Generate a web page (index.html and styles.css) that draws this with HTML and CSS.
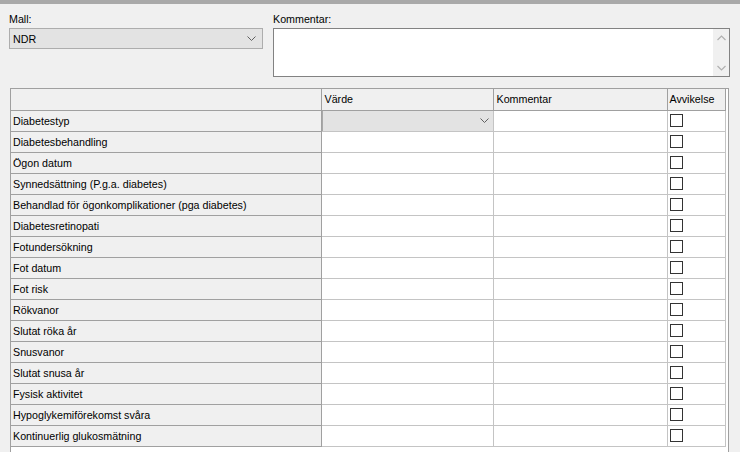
FILE: index.html
```html
<!DOCTYPE html>
<html lang="sv">
<head>
<meta charset="utf-8">
<title>NDR</title>
<link rel="stylesheet" href="styles.css">
</head>
<body>
<div class="topbar"></div>
<div class="form">
  <div class="field mall">
    <div class="label">Mall:</div>
    <div class="select">
      <span>NDR</span>
      <svg class="chev" width="9" height="6" viewBox="0 0 9 6"><path d="M0.5 0.5 L4.5 4.5 L8.5 0.5" fill="none" stroke="#606060" stroke-width="1"/></svg>
    </div>
  </div>
  <div class="field komm">
    <div class="label">Kommentar:</div>
    <div class="textarea">
      <div class="ta-body"></div>
      <div class="scroll">
        <svg width="9" height="6" viewBox="0 0 9 6"><path d="M0.5 5 L4.5 1 L8.5 5" fill="none" stroke="#b0b0b0" stroke-width="1.2"/></svg>
        <svg width="9" height="6" viewBox="0 0 9 6"><path d="M0.5 1 L4.5 5 L8.5 1" fill="none" stroke="#b0b0b0" stroke-width="1.2"/></svg>
      </div>
    </div>
  </div>
</div>
<div class="grid">
  <table>
    <colgroup><col class="c1"><col class="c2"><col class="c3"><col class="c4"></colgroup>
    <thead>
      <tr><th class="lab"></th><th>Värde</th><th>Kommentar</th><th>Avvikelse</th></tr>
    </thead>
    <tbody>
      <tr><td class="lab">Diabetestyp</td><td class="val sel"><div class="cellsel"><svg class="chev" width="9" height="6" viewBox="0 0 9 6"><path d="M0.5 0.5 L4.5 4.5 L8.5 0.5" fill="none" stroke="#606060" stroke-width="1"/></svg></div></td><td></td><td><span class="cb"></span></td></tr>
      <tr><td class="lab">Diabetesbehandling</td><td></td><td></td><td><span class="cb"></span></td></tr>
      <tr><td class="lab">Ögon datum</td><td></td><td></td><td><span class="cb"></span></td></tr>
      <tr><td class="lab">Synnedsättning (P.g.a. diabetes)</td><td></td><td></td><td><span class="cb"></span></td></tr>
      <tr><td class="lab">Behandlad för ögonkomplikationer (pga diabetes)</td><td></td><td></td><td><span class="cb"></span></td></tr>
      <tr><td class="lab">Diabetesretinopati</td><td></td><td></td><td><span class="cb"></span></td></tr>
      <tr><td class="lab">Fotundersökning</td><td></td><td></td><td><span class="cb"></span></td></tr>
      <tr><td class="lab">Fot datum</td><td></td><td></td><td><span class="cb"></span></td></tr>
      <tr><td class="lab">Fot risk</td><td></td><td></td><td><span class="cb"></span></td></tr>
      <tr><td class="lab">Rökvanor</td><td></td><td></td><td><span class="cb"></span></td></tr>
      <tr><td class="lab">Slutat röka år</td><td></td><td></td><td><span class="cb"></span></td></tr>
      <tr><td class="lab">Snusvanor</td><td></td><td></td><td><span class="cb"></span></td></tr>
      <tr><td class="lab">Slutat snusa år</td><td></td><td></td><td><span class="cb"></span></td></tr>
      <tr><td class="lab">Fysisk aktivitet</td><td></td><td></td><td><span class="cb"></span></td></tr>
      <tr><td class="lab">Hypoglykemiförekomst svåra</td><td></td><td></td><td><span class="cb"></span></td></tr>
      <tr><td class="lab">Kontinuerlig glukosmätning</td><td></td><td></td><td><span class="cb"></span></td></tr>
    </tbody>
  </table>
</div>
</body>
</html>
```

FILE: styles.css
```css
html, body {
  margin: 0;
  padding: 0;
}
body {
  background: #f0f0f0;
  font-family: "Liberation Sans", Arial, sans-serif;
  font-size: 10.7px;
  color: #000;
  height: 452px;
  overflow: hidden;
}
.topbar {
  height: 4px;
  background: #a9a9a9;
}
.form {
  display: flex;
  padding: 9px 0 0 9px;
}
.label {
  height: 15px;
  line-height: 13px;
}
.mall {
  width: 254px;
}
.komm {
  margin-left: 10px;
  width: 457px;
}
.select {
  box-sizing: border-box;
  height: 21px;
  border: 1px solid #adadad;
  background: #e3e3e3;
  display: flex;
  align-items: center;
  justify-content: space-between;
  padding: 0 6px 0 3px;
}
.chev {
  display: block;
}
.textarea {
  box-sizing: border-box;
  height: 49px;
  border: 1px solid #828282;
  background: #fff;
  display: flex;
}
.ta-body {
  flex: 1;
}
.scroll {
  width: 16px;
  background: #f0f0f0;
  display: flex;
  flex-direction: column;
  justify-content: space-between;
  align-items: center;
  padding: 6px 0 5px;
}
.grid {
  margin: 11px 0 0 10px;
  width: 719px;
  height: 364px;
  box-sizing: border-box;
  border: 1px solid #a0a0a0;
  border-bottom: none;
  background: #fff;
  overflow: hidden;
}
table {
  border-collapse: collapse;
  table-layout: fixed;
  width: 714px;
}
col.c1 { width: 310px; }
col.c2 { width: 172px; }
col.c3 { width: 174px; }
col.c4 { width: 58px; }
tr {
  height: 21px;
}
th, td {
  height: 21px;
  padding: 0 0 0 3px;
  border-right: 1px solid #c4c4c4;
  border-bottom: 1px solid #c4c4c4;
  text-align: left;
  font-weight: normal;
  white-space: nowrap;
  overflow: hidden;
  box-sizing: border-box;
}
th {
  background: #f0f0f0;
  border-right-color: #a0a0a0;
  border-bottom-color: #a0a0a0;
}
td.lab, th.lab {
  background: #f0f0f0;
  border-right: 1px solid #a0a0a0;
  border-bottom: 1px solid #a0a0a0;
  padding-left: 2px;
}
td.sel {
  padding: 0;
}
.cellsel {
  height: 20px;
  background: #e3e3e3;
  border-left: 1px solid #a8a8a8;
  display: flex;
  align-items: center;
  justify-content: flex-end;
  padding-right: 4px;
  box-sizing: border-box;
}
td:last-child, th:last-child {
  padding-left: 2px;
}
.cb {
  display: block;
  width: 11px;
  height: 11px;
  border: 1px solid #333;
  background: #fff;
}
```
